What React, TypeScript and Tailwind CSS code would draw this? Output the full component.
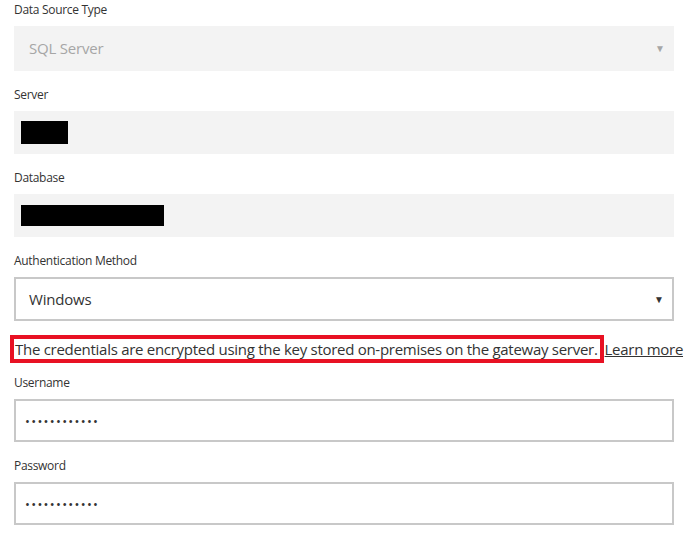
import { ChangeEvent } from "react";

function Label({ text }: { text: string }) {
  return <div className="h-[26px] text-[12px] leading-[20px] tracking-[-0.3px] text-[#333]">{text}</div>;
}

function Caret({ muted }: { muted?: boolean }) {
  return <span className={`text-[10px] ${muted ? "text-[#a6a6a6]" : "text-[#333]"}`}>▼</span>;
}

function Secret() {
  const noop = (_e: ChangeEvent<HTMLInputElement>) => {};
  return (
    <input
      type="password"
      value="abcdefghijkl"
      onChange={noop}
      className="block h-[43px] w-full border-2 border-[#c8c8c8] pl-[9px] text-[13px] tracking-[1.3px] text-[#333] outline-none"
    />
  );
}

export default function App() {
  return (
    <div className="min-h-[537px] w-[692px] bg-white" style={{ fontFamily: '"Open Sans", "Noto Sans", sans-serif' }}>
      <div className="flex w-[674px] flex-col pl-[14px]">
        <Label text="Data Source Type" />
        <div className="flex h-[45px] items-center justify-between bg-[#f3f3f3] pl-[15px] pr-[9px]">
          <span className="text-[15px] tracking-[-0.2px] text-[#a6a6a6]">SQL Server</span>
          <Caret muted />
        </div>

        <div className="mt-[14px]">
          <Label text="Server" />
          <div className="flex h-[43px] items-center bg-[#f3f3f3] pl-[7px]">
            <div className="h-[23px] w-[47px] bg-black" />
          </div>
        </div>

        <div className="mt-[14px]">
          <Label text="Database" />
          <div className="flex h-[43px] items-center bg-[#f3f3f3] pl-[7px]">
            <div className="h-[21px] w-[143px] bg-black" />
          </div>
        </div>

        <div className="mt-[14px]">
          <Label text="Authentication Method" />
          <div className="flex h-[44px] items-center justify-between border-2 border-[#c8c8c8] pl-[13px] pr-[8px]">
            <span className="text-[15px] tracking-[-0.2px] text-[#333]">Windows</span>
            <Caret />
          </div>
        </div>
      </div>

      <div className="mt-[14px] flex items-center pl-[10px] text-[15px] tracking-[-0.28px] text-[#333]">
        <span className="h-[28px] whitespace-nowrap border-4 border-[#e81123] pl-px pr-[2px] leading-[20px]">
          The credentials are encrypted using the key stored on-premises on the gateway server.
        </span>
        <a href="#" className="ml-px whitespace-nowrap leading-[20px] text-[#333] underline">
          Learn more
        </a>
      </div>

      <div className="flex w-[674px] flex-col pl-[14px]">
        <div className="mt-[10px]">
          <Label text="Username" />
          <Secret />
        </div>
        <div className="mt-[14px]">
          <Label text="Password" />
          <Secret />
        </div>
      </div>
    </div>
  );
}
